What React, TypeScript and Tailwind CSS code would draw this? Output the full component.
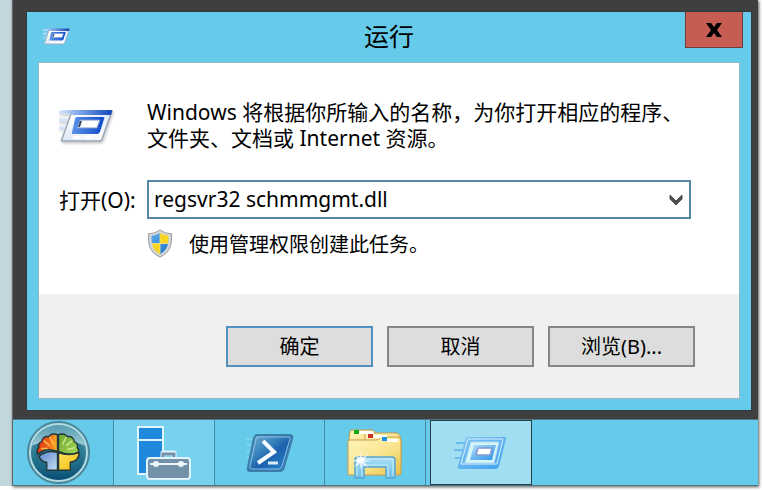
import { useState } from 'react';
import type { ReactNode } from 'react';

function RunIcon({ className }: { className: string }) {
  return (
    <svg viewBox="0 0 54 34" className={className} aria-hidden="true">
      <defs>
        <linearGradient id="runTop" x1="0" x2="1">
          <stop offset="0" stopColor="#b9d4f8" stopOpacity="0.3" />
          <stop offset="0.3" stopColor="#8db3ee" />
          <stop offset="1" stopColor="#0f46b8" />
        </linearGradient>
        <linearGradient id="runSheet" x1="0" x2="1" y1="1" y2="0">
          <stop offset="0" stopColor="#d9e5f5" />
          <stop offset="0.5" stopColor="#ffffff" />
          <stop offset="1" stopColor="#d4e3f7" />
        </linearGradient>
        <linearGradient id="runInner" x1="0" x2="1">
          <stop offset="0" stopColor="#5c94ec" />
          <stop offset="1" stopColor="#0d49c8" />
        </linearGradient>
      </defs>
      <path d="M0 2h12l-1 4H0zM0 9h9l-2 5H0zM0 17h6l-1 4H0z" fill="#c9ddf8" opacity="0.6" />
      <path d="M13 2h40l-10 28a3 3 0 0 1-3 2H4a1 1 0 0 1-1-2z" fill="url(#runSheet)" stroke="#9ba7b7" strokeWidth="1.5" />
      <path d="M1 1h51q1 0 1 1l-1 4H11l1-2H0z" fill="url(#runTop)" />
      <path d="M18 8h26q2 0 1 2l-4 13q-1 2-3 2H14q-2 0-1-2l3-13q0-2 2-2z" fill="url(#runInner)" />
      <path d="M21 11h20l-3 8H18z" fill="#fff" stroke="#7494c8" strokeWidth="1" />
      <path d="M21 12h2l-2 6h-2z" fill="#354564" />
      <path d="M15 27h7l-1 3h-7zM26 27h7l-1 3h-7z" fill="#fff" />
    </svg>
  );
}

function ShieldIcon() {
  return (
    <svg viewBox="0 0 26 30" className="h-[29px] w-[26px]" aria-hidden="true">
      <defs>
        <clipPath id="shieldClip">
          <path d="M13 4q4 3 9 3c0 8-1 15-9 19C5 22 4 15 4 7q5 0 9-3z" />
        </clipPath>
        <linearGradient id="shieldBlue" x1="0" x2="1" y2="1">
          <stop offset="0" stopColor="#68b7f3" />
          <stop offset="1" stopColor="#1269c1" />
        </linearGradient>
      </defs>
      <path d="M13 1q5 4 12 4c0 12-1 19-12 24C2 24 1 17 1 5q7 0 12-4z" fill="#d3d6d8" stroke="#94989a" />
      <g clipPath="url(#shieldClip)">
        <path d="M0 0h13v15H0zM13 15h13v15H13z" fill="url(#shieldBlue)" />
        <path d="M13 0h13v15H13zM0 15h13v15H0z" fill="#f8d51f" />
        <path d="M13 0v30M0 15h26" stroke="#f5e58b" strokeWidth="0.8" />
      </g>
    </svg>
  );
}

function StartIcon() {
  return (
    <svg viewBox="0 0 66 66" className="h-[65px] w-[65px]" aria-hidden="true">
      <defs>
        <radialGradient id="orb" cx="0.5" cy="0.6" r="0.6">
          <stop offset="0" stopColor="#3c96a8" />
          <stop offset="0.6" stopColor="#2b7890" />
          <stop offset="1" stopColor="#5199ae" />
        </radialGradient>
        <linearGradient id="orbLow" y2="1" x2="0">
          <stop offset="0.4" stopColor="#1c6c87" stopOpacity="0" />
          <stop offset="1" stopColor="#064a70" />
        </linearGradient>
        <linearGradient id="orbShine" y2="1" x2="0">
          <stop offset="0" stopColor="#6fb0c0" stopOpacity="0.5" />
          <stop offset="1" stopColor="#c9e8ee" stopOpacity="0.75" />
        </linearGradient>
        <linearGradient id="brainRed" x1="0" y1="0.5" x2="1" y2="0.6">
          <stop offset="0" stopColor="#df2f14" />
          <stop offset="0.6" stopColor="#ee6a1b" />
          <stop offset="1" stopColor="#fbbc2c" />
        </linearGradient>
        <linearGradient id="brainGreen" y2="1">
          <stop offset="0" stopColor="#6cab35" />
          <stop offset="1" stopColor="#a3d553" />
        </linearGradient>
        <linearGradient id="brainBlue" x2="1" y2="1">
          <stop offset="0" stopColor="#5585cc" />
          <stop offset="1" stopColor="#c9e0f3" />
        </linearGradient>
        <linearGradient id="brainYellow" x2="1" y2="1">
          <stop offset="0" stopColor="#fbe45c" />
          <stop offset="1" stopColor="#f5b80d" />
        </linearGradient>
      </defs>
      <circle cx="33" cy="33" r="31" fill="url(#orb)" stroke="#4b8598" strokeWidth="2" />
      <circle cx="33" cy="33" r="29" fill="url(#orbLow)" stroke="#b2dce5" strokeWidth="2" />
      <path d="M6 26a28 28 0 0 1 54 0Q33 15 6 26z" fill="url(#orbShine)" />
      <g stroke="#23383c" strokeWidth="1.5" strokeLinejoin="round">
        <path d="M32 32V15c-4-2-8 0-9 2-4-1-7 2-7 5-3 1-4 4-3 6-2 2-2 5-1 7 6-6 12-6 20-3z" fill="url(#brainRed)" />
        <path d="M33 32V15c4-2 8 0 9 2 4-1 7 2 7 5 3 1 4 4 3 6 1 1 2 3 1 5-7 3-13 2-20-1z" fill="url(#brainGreen)" />
        <path d="M32 33v18H21v-8c-3 0-6-2-8-6 6-5 12-6 19-4z" fill="url(#brainBlue)" />
        <path d="M33 33c7 3 13 3 21 0 0 5-3 9-9 10v8H33z" fill="url(#brainYellow)" />
      </g>
      <path d="M18 21l6 5M24 17l4 8M15 29l7 0" stroke="#fcd54f" strokeWidth="1.5" opacity="0.8" />
      <path d="M47 21l-6 5M41 17l-4 8M50 28l-8 2" stroke="#e0f0a0" strokeWidth="1.5" opacity="0.8" />
    </svg>
  );
}

function ServerIcon() {
  return (
    <svg viewBox="0 0 56 56" className="h-14 w-14" aria-hidden="true">
      <path d="M2 2h25v47H2z" fill="#1f89dc" stroke="#e0f4fb" strokeWidth="2" />
      <path d="M1 15h27" stroke="#e0f4fb" strokeWidth="2" />
      <path d="M27 32v-4h11v4" fill="none" stroke="#e0f4fb" strokeWidth="5" strokeLinejoin="round" />
      <rect x="11" y="33" width="43" height="21" rx="3" fill="#7392aa" stroke="#e0f4fb" strokeWidth="2" />
      <path d="M27 32v-3h11v3" fill="none" stroke="#7392aa" strokeWidth="3" />
      <path d="M14 39h37" stroke="#edf7fb" strokeWidth="2" />
      <circle cx="20" cy="39" r="3" fill="#edf7fb" />
      <circle cx="45" cy="39" r="3" fill="#edf7fb" />
    </svg>
  );
}

function PowerShellIcon() {
  return (
    <svg viewBox="0 0 48 40" className="h-10 w-12" aria-hidden="true">
      <defs>
        <linearGradient id="shellFill" x1="0" x2="1" y1="0" y2="1">
          <stop offset="0" stopColor="#78aed5" />
          <stop offset="0.4" stopColor="#337fba" />
          <stop offset="0.55" stopColor="#1c61ad" />
          <stop offset="1" stopColor="#2e8ad1" />
        </linearGradient>
      </defs>
      <path d="M0 6h8M0 12h6M0 18h4M0 24h3" stroke="#a5d9ee" strokeWidth="2" opacity="0.4" />
      <path d="M11 2h33q3 0 2 4l-8 28q-1 4-4 4H4q-3 0-2-4L8 5q1-3 3-3z" fill="url(#shellFill)" stroke="#3c7eaa" strokeWidth="2" />
      <path d="M12 4h31q2 0 1 2l-8 27q-1 3-3 3H5q-2 0-1-3l6-27q0-2 2-2z" fill="none" stroke="#8cc3e4" strokeWidth="1" />
      <path d="M17 8l11 11-16 11" fill="none" stroke="#f4fafe" strokeWidth="4" />
      <path d="M22 30h10" stroke="#d9ecf9" strokeWidth="3" />
    </svg>
  );
}

function ExplorerIcon() {
  return (
    <svg viewBox="0 0 56 52" className="h-[52px] w-14" aria-hidden="true">
      <defs>
        <linearGradient id="folder" x2="1" y2="1">
          <stop offset="0" stopColor="#fff4bd" />
          <stop offset="0.55" stopColor="#f9e58e" />
          <stop offset="1" stopColor="#e9bf44" />
        </linearGradient>
        <linearGradient id="stand" y2="1" x2="0">
          <stop offset="0" stopColor="#a9dff5" />
          <stop offset="1" stopColor="#6cbde6" />
        </linearGradient>
      </defs>
      <g fill="url(#folder)" stroke="#c79c48" strokeLinejoin="round">
        <path d="M2 12l1-7q0-2 2-2h20q2 0 3 3l2 6v20H2z" />
        <path d="M18 14V8q0-2 2-2h29q3 0 4 3l1 5v20H18z" />
        <path d="M1 47V15q0-2 2-2h26q3 0 4-2l1-1h17q2 0 3 3v33q0 2-2 2H3q-2 0-2-1z" />
      </g>
      <path d="M11 4h15l1 3H11zM27 8h13v3H27zM40 12h11v3H40z" fill="#fff" />
      <path d="M7 3h5v4H7z" fill="#11ad18" />
      <path d="M21 7h5v4h-5z" fill="#cb3223" />
      <path d="M35 10h5v4h-5z" fill="#1692ee" />
      <path d="M8 51V33q0-3 3-3h34q3 0 3 3v18h-9V40H17v11z" fill="url(#stand)" stroke="#5ba7cf" strokeWidth="1.5" strokeLinejoin="round" />
      <path d="M10 49V32h36v17M15 50V38h26v12" fill="none" stroke="#cdf0fb" strokeWidth="1" />
      <path d="M14 22l1 9 6-4-4 6 7 1-7 1 4 5-6-3-1 6-1-6-6 3 4-5-6-1 6-2-3-5 5 4z" fill="#fff" opacity="0.75" />
      <circle cx="14" cy="33" r="3" fill="#fff" opacity="0.8" />
    </svg>
  );
}

function RunTaskIcon() {
  return (
    <svg viewBox="0 0 54 36" className="h-9 w-[54px]" aria-hidden="true">
      <defs>
        <linearGradient id="taskEdge" x2="1" y2="1">
          <stop offset="0" stopColor="#86c4f2" />
          <stop offset="1" stopColor="#3fa2ee" />
        </linearGradient>
        <linearGradient id="taskInner" x2="1" y2="1">
          <stop offset="0" stopColor="#b5e0fa" />
          <stop offset="1" stopColor="#2991e8" />
        </linearGradient>
      </defs>
      <path d="M2 8h10M0 15h9M1 23h6" stroke="#6bbcec" strokeWidth="2" />
      <path d="M14 2h37q2 0 1 2l-7 27q-1 3-3 3H6q-3 0-2-3l7-26q1-3 3-3z" fill="url(#taskEdge)" />
      <path d="M14 4h35l-6 25H7z" fill="none" stroke="#d8f1fc" strokeWidth="1" />
      <path d="M17 7h28l-5 21H11z" fill="#d6f5f6" stroke="#b0dcf6" strokeWidth="1" />
      <path d="M20 10h22l-4 15H16z" fill="url(#taskInner)" />
      <path d="M24 13h14l-2 7H22z" fill="#fff" stroke="#8499d3" strokeWidth="1.5" strokeLinejoin="round" />
    </svg>
  );
}

function DialogButton({ children, primary = false }: { children: ReactNode; primary?: boolean }) {
  const edge = primary ? 'border-[#5291bd]' : 'border-[#868686]';
  return (
    <button type="button" className={`h-[41px] w-[147px] border-2 bg-[#dddddd] text-xl leading-6 ${edge}`}>
      {children}
    </button>
  );
}

function TaskButton({ label, className, children }: { label: string; className: string; children: ReactNode }) {
  return (
    <button type="button" aria-label={label} className={`flex items-center justify-center ${className}`}>
      {children}
    </button>
  );
}

export default function App() {
  const [command, setCommand] = useState('regsvr32 schmmgmt.dll');
  return (
    <div className="flex min-h-screen bg-white pr-1 pb-1 font-['Noto_Sans','Noto_Sans_CJK_SC',sans-serif] text-black">
      <div className="w-3 shrink-0 bg-[#c2d6dd]" />
      <main className="flex min-w-0 flex-1 flex-col border-l border-[#666666] bg-[#3f3f3f] shadow-[1px_1px_3px_#555555]">
        <section aria-labelledby="dialog-title" className="mt-[11px] mr-[6px] mb-2 ml-[13px] flex flex-1 flex-col border border-[#313b3e] bg-[#66cbea] px-3 pb-3">
          <header className="grid h-[51px] grid-cols-[1fr_auto_1fr] items-start">
            <RunIcon className="mt-4 ml-1 h-[17px] w-[27px]" />
            <h1 id="dialog-title" className="pt-2 text-[25px] leading-8">运行</h1>
            <button type="button" aria-label="关闭" className="-mr-1 flex h-9 w-[58px] items-center justify-center justify-self-end border border-t-0 border-[#713d39] bg-[#c75c52]">
              <svg viewBox="0 0 16 14" className="h-[14px] w-4" aria-hidden="true">
                <path d="M0 0h5l3 4 3-4h5l-5 7 5 7h-5l-3-4-3 4H0l5-7z" fill="#000" />
              </svg>
            </button>
          </header>
          <form className="flex flex-1 flex-col bg-white outline outline-[#94b8c4]" onSubmit={(e) => e.preventDefault()}>
            <div className="flex flex-1 flex-col px-5 pt-9">
              <div className="flex">
                <div className="w-[88px] shrink-0 pt-[10px]">
                  <RunIcon className="h-[34px] w-[54px] drop-shadow-[1px_2px_1px_#00000033]" />
                </div>
                <p className="text-[21px] leading-[26px] whitespace-nowrap">
                  Windows 将根据你所输入的名称，为你打开相应的程序、
                  <br />
                  文件夹、文档或 Internet 资源。
                </p>
              </div>
              <div className="mt-[29px] mr-7 flex items-center">
                <label htmlFor="command" className="w-[88px] shrink-0 text-[21px] leading-[26px] whitespace-nowrap">
                  打开(O):
                </label>
                <div className="flex h-[39px] min-w-0 flex-1 border-2 border-[#5588a6] bg-white">
                  <input
                    id="command"
                    value={command}
                    onChange={(e) => setCommand(e.target.value)}
                    className="min-w-0 flex-1 px-[5px] pb-[2px] text-[21px] leading-[26px] outline-none"
                  />
                  <button type="button" aria-label="历史记录" className="flex w-[26px] items-center justify-center">
                    <svg viewBox="0 0 14 12" className="h-3 w-[14px]" aria-hidden="true">
                      <path d="M1 1l6 6 6-6v4l-6 6-6-6z" fill="#505050" stroke="#505050" />
                    </svg>
                  </button>
                </div>
              </div>
              <div className="mt-[9px] ml-[88px] flex items-center gap-4">
                <ShieldIcon />
                <p className="pt-1 text-xl leading-[26px]">使用管理权限创建此任务。</p>
              </div>
            </div>
            <footer className="flex h-[104px] items-start justify-end gap-[14px] bg-[#f0f0f0] pt-8 pr-11">
              <DialogButton primary>确定</DialogButton>
              <DialogButton>取消</DialogButton>
              <DialogButton>浏览(B)...</DialogButton>
            </footer>
          </form>
        </section>
        <nav aria-label="任务栏" className="flex h-[67px] border-y border-[#4d7884] bg-[#66cbea]">
          <TaskButton label="开始" className="w-[100px] pr-[10px]">
            <StartIcon />
          </TaskButton>
          <TaskButton label="服务器管理器" className="w-[102px] border-x border-[#438ba2] bg-[#78d2ed]">
            <ServerIcon />
          </TaskButton>
          <TaskButton label="PowerShell" className="w-[109px]">
            <PowerShellIcon />
          </TaskButton>
          <TaskButton label="文件资源管理器" className="mr-1 w-[102px] border-x border-[#438ba2]">
            <ExplorerIcon />
          </TaskButton>
          <TaskButton label="运行" className="w-[102px] border border-[#263d45] bg-[#a1def2]">
            <RunTaskIcon />
          </TaskButton>
        </nav>
      </main>
    </div>
  );
}
